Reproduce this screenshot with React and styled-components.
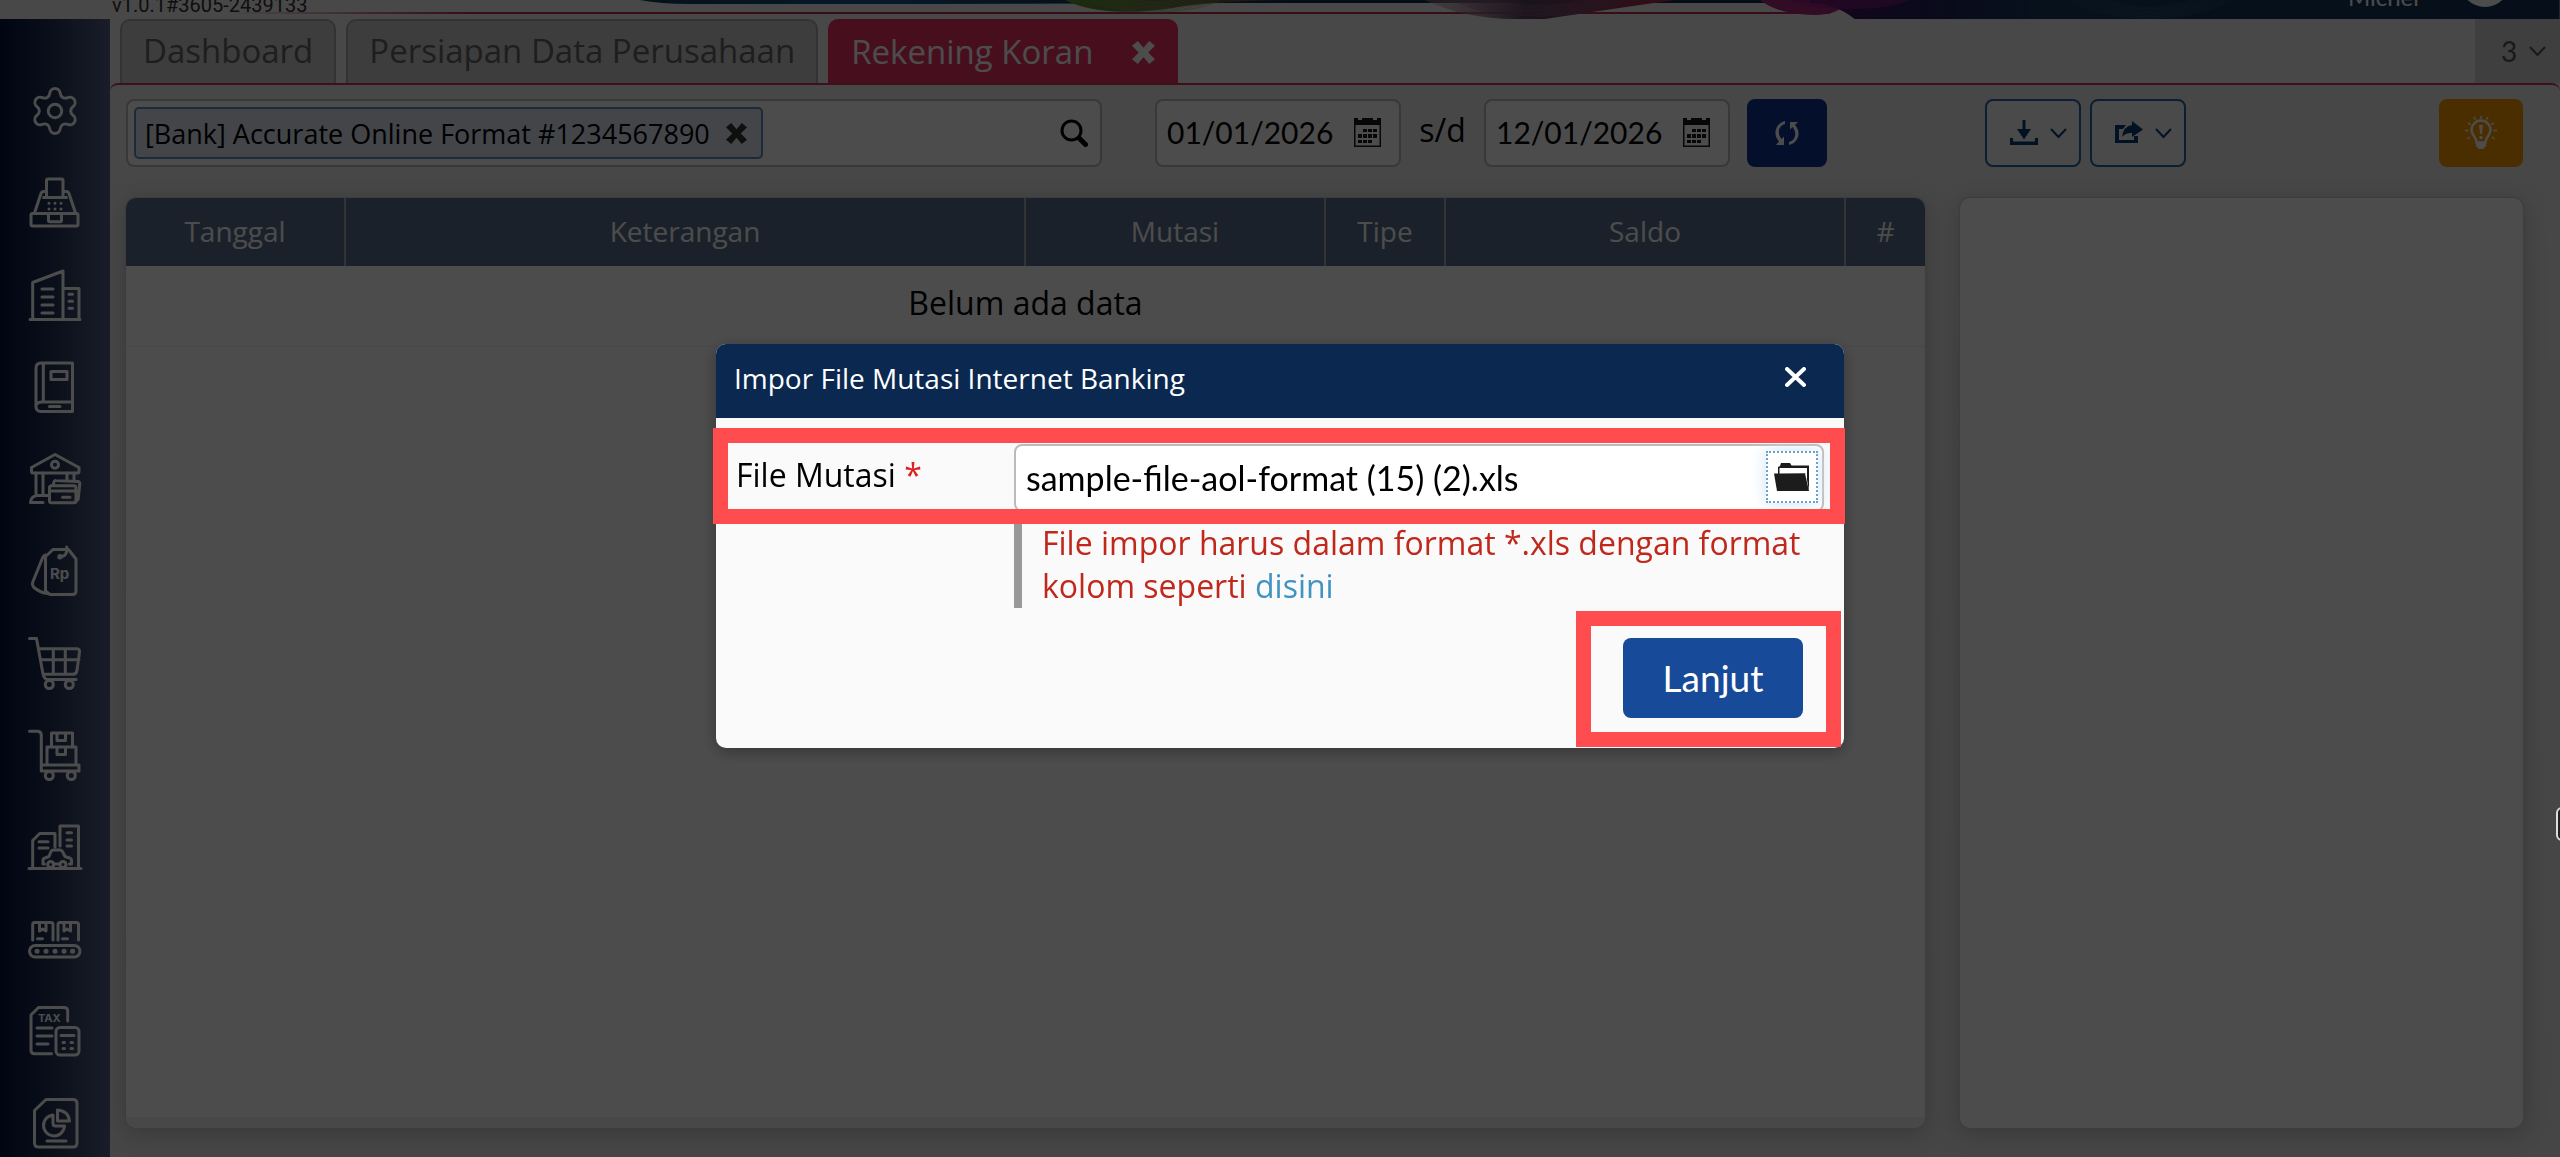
import styled, { createGlobalStyle, css } from "styled-components";
import { Settings } from "lucide-react";
import { useState } from "react";

const GlobalStyle = createGlobalStyle`
  * {
    box-sizing: border-box;
  }

  body {
    margin: 0;
    font-family: "Open Sans", "Noto Sans", sans-serif;
    font-size: 32px;
    color: #000;
    background: #f0f0f0;
  }

  button, input {
    font-family: inherit;
  }
`;

const Shell = styled.div`
  height: 100vh;
  display: flex;
  flex-direction: column;
  overflow: hidden;
`;

const Header = styled.header`
  position: relative;
  flex: none;
  height: 19px;
  display: flex;
  align-items: flex-end;
  justify-content: space-between;
  padding: 0 50px 0 112px;
  overflow: hidden;
  background: #f0f0f0;
`;

const Wave = styled.svg`
  position: absolute;
  top: 0;
  right: 0;
  width: 91%;
  height: 100%;
`;

const Version = styled.span`
  position: relative;
  font-family: Roboto, sans-serif;
  font-size: 20px;
  line-height: 20px;
  padding-bottom: 4px;
  color: #333;
`;

const User = styled.div`
  position: relative;
  display: flex;
  align-items: flex-end;
  gap: 38px;
  padding-bottom: 12px;
  font-family: Lato, sans-serif;
  font-size: 24px;
  line-height: 20px;
  color: #fff;
`;

const Avatar = styled.span`
  width: 50px;
  height: 50px;
  border-radius: 50%;
  background: #fff;
`;

const Body = styled.div`
  flex: 1;
  min-height: 0;
  display: flex;
`;

const Sidebar = styled.nav`
  flex: none;
  width: 110px;
  padding-top: 46px;
  overflow: hidden;
  background: linear-gradient(90deg, #00123c 0%, #24365a 50%, #57638a 100%);
`;

const NavItem = styled.a`
  height: 92px;
  display: flex;
  align-items: center;
  justify-content: center;
  color: #fff;

  svg {
    overflow: visible;
  }
`;

const Main = styled.main`
  flex: 1;
  min-width: 0;
  display: flex;
  flex-direction: column;
`;

const TabBar = styled.div`
  flex: none;
  height: 64px;
  display: flex;
  gap: 10px;
  padding-left: 10px;
`;

const Tab = styled.button`
  display: flex;
  align-items: center;
  gap: 39px;
  padding: 0 21px 2px;
  border: 2px solid #aaa;
  border-bottom: none;
  border-radius: 10px 10px 0 0;
  background: #cdcdcd;
  color: #666;
  font-size: 33px;
  line-height: 44px;
  white-space: nowrap;

  ${({ $active }) =>
    $active &&
    css`
      padding-bottom: 0;
      border-color: #ed3264;
      background: #ed3264;
      color: #fff;
    `}
`;

const TabCount = styled.button`
  margin-left: auto;
  width: 85px;
  display: flex;
  align-items: center;
  justify-content: center;
  gap: 12px;
  padding: 0 0 0 12px;
  border: none;
  background: #d4d4d4;
  color: #555;
  font-family: Lato, sans-serif;
  font-size: 28px;
`;

const Workspace = styled.section`
  flex: 1;
  min-height: 0;
  display: grid;
  grid-template-columns: minmax(0, 1fr) 563px;
  grid-template-rows: 68px minmax(0, 1fr);
  gap: 31px 35px;
  padding: 14px 37px 29px 16px;
  border-top: 2px solid #d0365f;
  border-radius: 8px 8px 0 0;
  background: linear-gradient(#eee, #e9e9e9);
`;

const Toolbar = styled.div`
  display: flex;
  align-items: stretch;
  padding-right: ${({ $end }) => $end || 0}px;
  padding-left: ${({ $start }) => $start || 0}px;
`;

const SearchBox = styled.div`
  flex: 1;
  min-width: 0;
  display: flex;
  align-items: center;
  gap: 10px;
  margin-right: 53px;
  padding: 6px 12px 6px 6px;
  border: 2px solid #bbb;
  border-radius: 8px;
  background: #fff;
`;

const Chip = styled.span`
  display: flex;
  align-items: center;
  gap: 16px;
  height: 52px;
  padding: 0 14px 0 9px;
  border: 2px solid #5b8fc7;
  border-radius: 5px;
  background: #dfe6f3;
  font-size: 27px;
  white-space: nowrap;

  svg {
    color: #333;
  }
`;

const IconButton = styled.button`
  display: flex;
  align-items: center;
  justify-content: center;
  padding: 0;
  border: none;
  background: none;
  color: inherit;
  cursor: pointer;
`;

const SearchInput = styled.input`
  flex: 1;
  min-width: 0;
  border: none;
  outline: none;
  background: none;
  font-size: 28px;
`;

const DateField = styled.span`
  width: 246px;
  display: flex;
  align-items: center;
  padding: 0 18px 2px 10px;
  border: 2px solid #bbb;
  border-radius: 8px;
  background: #fff;

  input {
    flex: 1;
    min-width: 0;
    padding: 0;
    border: none;
    outline: none;
    background: none;
    font-family: Lato, sans-serif;
    font-size: 30px;
  }
`;

const Until = styled.span`
  width: 83px;
  text-align: center;
  line-height: 62px;
`;

const ToolButton = styled.button`
  width: ${({ $width }) => $width}px;
  display: flex;
  align-items: center;
  justify-content: center;
  gap: 12px;
  padding: 0 0 0 ${({ $outline }) => ($outline ? 11 : 0)}px;
  border-radius: 8px;
  border: 2px solid ${({ $color }) => $color};
  background: ${({ $color, $outline }) => ($outline ? "#f8f8f8" : $color)};
  color: ${({ $outline }) => ($outline ? "#0a3c74" : "#fff")};
  margin-left: ${({ $push }) => $push};
`;

const Card = styled.div`
  position: relative;
  display: flex;
  flex-direction: column;
  overflow: hidden;
  border-radius: 10px;
  background: #fff;
  box-shadow: 0 0 0 1px #ccc, 0 4px 24px rgba(0, 0, 0, 0.22);
`;

const CardFoot = styled.div`
  height: 11px;
  margin-top: auto;
  background: #f0f0f0;
`;

const Table = styled.table`
  width: 100%;
  table-layout: fixed;
  border-collapse: collapse;

  th {
    height: 68px;
    padding: 0 0 2px;
    font-size: 28px;
    font-weight: 400;
    color: #fff;
    background: #5a718c;
  }

  th + th {
    border-left: 2px solid #aaa;
  }

  td {
    height: 80px;
    padding: 0 0 6px;
    text-align: center;
    border-bottom: 1px solid #eee;
  }
`;

const Backdrop = styled.div`
  position: fixed;
  inset: 0;
  display: flex;
  justify-content: center;
  align-items: flex-start;
  padding-top: 344px;
  background: rgba(0, 0, 0, 0.7);
`;

const Dialog = styled.div`
  width: 1128px;
  max-width: 96vw;
  border-radius: 10px;
  background: #fafafa;
  box-shadow: 0 4px 16px rgba(0, 0, 0, 0.3);
`;

const DialogHead = styled.div`
  height: 74px;
  display: flex;
  align-items: center;
  justify-content: space-between;
  padding: 0 38px 6px 18px;
  border-radius: 10px 10px 0 0;
  background: #0a2850;
  color: #fff;

  h2 {
    margin: 0;
    font-size: 28px;
    font-weight: 400;
  }
`;

const DialogBody = styled.form`
  padding: 26px 20px 0;
`;

const FormRow = styled.div`
  position: relative;
  display: flex;

  label {
    width: 278px;
    line-height: 62px;
  }

  em {
    font-style: normal;
    color: #dd2020;
  }
`;

const FileField = styled.span`
  flex: 1;
  height: 68px;
  display: flex;
  align-items: center;
  padding: 0 4px 2px 10px;
  border: 2px solid #bbb;
  border-radius: 8px;
  background: #fff;

  input {
    flex: 1;
    padding: 0;
    border: none;
    outline: none;
    font-family: Lato, sans-serif;
    font-size: 34px;
  }
`;

const BrowseButton = styled(IconButton)`
  width: 52px;
  height: 52px;
  border: 2px dotted #67a3cf;
  box-shadow: 0 0 16px #cfe4f7;
  color: #1c1c1c;
`;

const Hint = styled.p`
  margin: 0 0 0 278px;
  padding: 9px 8px 1px 20px;
  border-left: 8px solid #999;
  line-height: 43px;
  color: #c0281c;

  a {
    color: #4193c1;
    text-decoration: none;
  }
`;

const DialogFoot = styled.div`
  display: flex;
  justify-content: flex-end;
  padding: 30px 21px 30px 0;
`;

const Focus = styled.span`
  position: relative;
  display: flex;
`;

const SubmitButton = styled.button`
  width: 180px;
  height: 80px;
  padding-bottom: 3px;
  border: none;
  border-radius: 8px;
  background: #174a98;
  color: #fff;
  font-family: Lato, sans-serif;
  font-size: 37px;
`;

// thick frame drawn around the part the user should look at
const Marker = styled.span`
  position: absolute;
  inset: ${({ $inset }) => $inset};
  border: 15px solid #ff4d4f;
  pointer-events: none;
`;

const EdgeHandle = styled.button`
  position: fixed;
  right: -20px;
  top: 807px;
  width: 24px;
  height: 34px;
  border: 2px solid #ddd;
  border-radius: 6px;
  background: #222;
`;

const line = {
  fill: "none",
  stroke: "currentColor",
  strokeWidth: 3,
  strokeLinecap: "round",
  strokeLinejoin: "round",
};

const Svg = ({ w = 52, h = 52, children, ...rest }) => (
  <svg width={w} height={h} viewBox={`0 0 ${w} ${h}`} aria-hidden="true" {...rest}>
    {children}
  </svg>
);

const Cashier = () => (
  <Svg {...line}>
    <rect x="2" y="36.5" width="47" height="12.5" rx="1.5" />
    <path d="M5.5 36 12 16.5q.6-2 3-2h2M46.5 36 40 16.5q-.6-2-3-2h-2M14.5 20.5h23" />
    <path d="M17.5 20V3.5q0-1.5 1.5-1.5h13.5q1.5 0 1.5 1.5V20M19.5 37v6.5q0 1.2 1.2 1.2h10.6q1.2 0 1.2-1.2V37" />
    <path d="M20 26.3h0M26 26.3h0M32 26.3h0M20 32h0M26 32h0M32 32h0" />
  </Svg>
);

const Building = () => (
  <Svg {...line}>
    <path d="M1 50.5h50M3.7 50V13.5L34 2v48M34 19.5h16V50M13 20h11M13 28h11M13 36h11M13 44h11M40 25.3h3.5M40 32.3h3.5M40 39.3h3.5" />
  </Svg>
);

const Ledger = () => (
  <Svg {...line}>
    <path d="M43.5 2H12q-5 0-5 5v38.5q0 5 5 5h31.5zM14.3 2v39M7.5 43.5q1.5-2.5 5-2.5h31M20.5 45.5H31" />
    <path d="M22 10.5h16v8H22z" />
  </Svg>
);

const Bank = () => (
  <Svg {...line}>
    <path d="M26 1.5 2.5 14.5v4q0 1.5 1.5 1.5h44.5q1.5 0 1.5-1.5v-4z" />
    <circle cx="26" cy="11.7" r="3.5" />
    <path d="M7 20v22M14 20v21M38 20v6M45 20v6M20 42.5H7.5q-5.5 1-6 7H14" />
    <rect x="20.5" y="32.7" width="26.5" height="17" rx="2" />
    <path d="M20.5 38H47M33.500 44.3H41M24.5 32q0-4.7 2.5-4.5l22 1q2 .5 1.8 2.500l-1.6 15q-.5 1.5-2 1.5" />
  </Svg>
);

const PriceTag = () => (
  <Svg {...line}>
    <path d="M16.5 11.5 24 4.5h15.5L47 14v32q0 3.5-3.5 3.5H21L16.5 46z" />
    <path d="M16.5 10q-2 .5-3 3L3.8 37q-1 3 1.2 5.5 6 5 13 6M37.7 2v3.5q0 5-6 6.5" />
    <circle cx="31" cy="11.7" r="1.2" />
    <text x="21" y="34" fontFamily="Inter, sans-serif" fontSize="15" fontWeight="700" fill="currentColor" stroke="none">
      Rp
    </text>
  </Svg>
);

const Cart = () => (
  <Svg {...line}>
    <path d="M.5 1.5h7L14 37q1 5.5 5 5.5h28M10 11.7h37.5q3.5 0 3 3.5L48 33.2q-.5 4-4 4H14M12 22.7h38M24.3 12v25M36.3 12v25" />
    <circle cx="20.3" cy="47.5" r="4" />
    <circle cx="40.3" cy="47.5" r="4" />
  </Svg>
);

const Trolley = () => (
  <Svg {...line}>
    <path d="M.5 2.3h8q3.8 0 3.8 4V42H50v-6H13" />
    <path d="M22.5 17V4h21v13M18 35V18h29v17M28 4v7.5h8.5V4M28 18v7.5h8.5V18" />
    <circle cx="20.3" cy="46.5" r="4" />
    <circle cx="42.3" cy="46.5" r="4" />
  </Svg>
);

const Assets = () => (
  <Svg {...line}>
    <path d="M0 47.5h52M3.7 47V19.5l7-7H26V26M31 25V5h18.5v42M10 20.7h9M10 27h9M38 11.7h4.5M38 19h4.5M38 25h4.5" />
    <path d="M15.5 43H14v-3.5q0-2 2-2.5l4-1.5 2-5q.8-1.5 2.5-1.5H31q1.5 0 2.5 1.5l2.5 5 4.5 1.5q2 .5 2 2.5V43h-2M25 43h5" />
    <circle cx="21.7" cy="43.5" r="3" />
    <circle cx="34" cy="43.5" r="3" />
  </Svg>
);

const Conveyor = () => (
  <Svg {...line}>
    <path d="M3.7 27V11.5q0-2 2-2H22q2 0 2 2V27M29 27V11.5q0-2 2-2h16.5q2 0 2 2V27M10.5 10v8l3-2 3.500 2v-8M35 10v8l3-2 3.500 2v-8M8.5 25.7h5M33.5 25.7h5" />
    <rect x="0.5" y="32.5" width="50.5" height="11.5" rx="5.7" />
    <path d="M8 38.2h.1M17 38.2h.1M26 38.2h.1M35 38.2h.1M43.5 38.2h.1" strokeWidth="5" />
  </Svg>
);

const Tax = () => (
  <Svg {...line}>
    <path d="M22.5 48.7h-17Q2 48.7 2 45.2V10l7.5-7.5H35q3.7 0 3.7 3.7V16M8 23h15M8 31h15M8 39h11" />
    <rect x="27" y="22.5" width="23" height="27.5" rx="4" />
    <path d="M32 30.5h13M34 37.5h1.5M42 37.5h1.5M34 43.5h1.5M42 43.5h1.5" />
    <text x="9" y="17" fontFamily="Inter, sans-serif" fontSize="11" fontWeight="700" fill="currentColor" stroke="none">
      TAX
    </text>
  </Svg>
);

const Report = () => (
  <Svg {...line}>
    <path d="M5.5 13.5 17 2.5h27q4 0 4 4V46q0 4-4 4H9.500q-4 0-4-4z" />
    <path d="M24 18a10.5 10.5 0 1 0 11.5 11h-9Q24 29 24 26.5zM28.5 13v11h12q-1-10-12-11zM18 44h19" />
  </Svg>
);

const Gear = () => <Settings size={54} strokeWidth={1.3} aria-hidden="true" />;

const Cross = ({ size = 23 }) => (
  <Svg w={size} h={size} viewBox="0 0 22 22">
    <path
      d="M5.5 0 11 6.5 16.5 0 22 4.5 15.5 11 22 17.5 16.5 22 11 15.5 5.5 22 0 17.5 6.5 11 0 4.5z"
      fill="currentColor"
    />
  </Svg>
);

const Chevron = () => (
  <Svg w={17} h={11} {...line} strokeWidth="2" strokeLinecap="butt" strokeLinejoin="miter">
    <path d="M1 1l7.5 8L16 1" />
  </Svg>
);

const Magnifier = () => (
  <Svg w={28} h={28} {...line} strokeWidth="3">
    <circle cx="11.5" cy="11.5" r="9.5" />
    <path d="M19 19l6.5 6.5" strokeWidth="5" />
  </Svg>
);

const Calendar = () => (
  <Svg w={27} h={30} fill="#1a1a1a">
    <path d="M0 1h4v2h4V1h11v2h4V1h4v29H0zM1.5 8v20.5h24V8z" fillRule="evenodd" />
    <path d="M9 12h4v3H9zM14 12h4v3h-4zM19 12h4v3h-4zM4 17h4v4H4zM9 17h4v4H9zM14 17h4v4h-4zM19 17h4v4h-4zM4 23h4v3H4zM9 23h4v3H9zM14 23h4v3h-4z" />
  </Svg>
);

const Refresh = () => (
  <Svg w={24} h={24} fill="currentColor">
    <path d="M10 0v3C3 5 2 13 6.5 18L9 15.5V24H1l3-3.5C-3 13 1 2 10 0zM14 24v-3c7-2 8-10 3.5-15L15 8.5V1h8l-3 3c7 7.5 3 18-6 20z" />
  </Svg>
);

const Download = () => (
  <Svg w={28} h={26} fill="currentColor">
    <path d="M12.5 0h3v9H21l-7 10.5L7 9h5.5zM0 18h3v3.5h22V18h3v7H0z" />
  </Svg>
);

const Share = () => (
  <Svg w={28} h={26} fill="currentColor">
    <path d="M0 5h11L8 9H4v11h15v-4h4v7H0zM17 1l11 8.5L17 17v-4q-6-.5-10 4Q8 6.5 17 5z" />
  </Svg>
);

const Bulb = () => (
  <Svg w={32} h={34} fill="none" stroke="currentColor" strokeWidth="2">
    <path d="M11.5 26.5C11 20 6.5 19.5 6.5 14a9.5 9.5 0 0 1 19 0c0 5.5-4.5 6-5 12.5z" strokeWidth="2.5" />
    <path d="M11 27h10v4h-2v2h-6v-2h-2z" fill="currentColor" stroke="none" />
    <path d="M14 9h4l-1 9h-2zM14.5 20h3v3h-3z" fill="currentColor" stroke="none" />
    <path d="M16 0v3M9 1l1.5 2.5M23 1l-1.5 2.5M3 7l2.5 1.5M29 7l-2.5 1.5M0 14.5h3.5M28.5 14.5H32M2.5 23 5 21M29.5 23 27 21" strokeWidth="1.5" />
  </Svg>
);

const Close = () => (
  <Svg w={21} h={22} {...line} strokeWidth="4">
    <path d="M2 2l17 16M19 2 2 18" />
  </Svg>
);

const Folder = () => (
  <Svg w={36} h={30} fill="currentColor">
    <path d="M4 12V5l2-1 1-3h9l1.5 2.5H35V29L32 12z" />
    <path d="M5.5 12V6H33v17l-1.5-11.5z" fill="#fff" />
    <path d="M0 11.5h31L35 29H3z" />
  </Svg>
);

const menu = [
  ["Pengaturan", Gear],
  ["Kasir", Cashier],
  ["Perusahaan", Building],
  ["Buku Besar", Ledger],
  ["Kas & Bank", Bank],
  ["Penjualan", PriceTag],
  ["Pembelian", Cart],
  ["Persediaan", Trolley],
  ["Aset Tetap", Assets],
  ["Manufaktur", Conveyor],
  ["Pajak", Tax],
  ["Laporan", Report],
];

const rings = [0, 4, 8, 12, 16, 20, 24, 28, 32];

const HeaderWave = () => (
  <Wave viewBox="0 0 2330 19" preserveAspectRatio="none" aria-hidden="true">
    <defs>
      <linearGradient id="rule" gradientUnits="userSpaceOnUse" x1="0" y1="0" x2="1600" y2="0">
        <stop offset="0" stopColor="#b83050" stopOpacity="0" />
        <stop offset="0.15" stopColor="#b83050" />
      </linearGradient>
      <linearGradient id="navy">
        <stop offset="0" stopColor="#123a5c" />
        <stop offset="0.2" stopColor="#1c5488" />
        <stop offset="0.4" stopColor="#12304c" />
        <stop offset="1" stopColor="#12304c" />
      </linearGradient>
      <linearGradient id="green">
        <stop offset="0" stopColor="#609838" />
        <stop offset="0.5" stopColor="#5c6038" />
        <stop offset="1" stopColor="#a05048" stopOpacity="0.6" />
      </linearGradient>
      <linearGradient id="pink">
        <stop offset="0" stopColor="#d0a0b0" stopOpacity="0.4" />
        <stop offset="0.4" stopColor="#54445c" />
        <stop offset="1" stopColor="#b02c50" />
      </linearGradient>
      <linearGradient id="night">
        <stop offset="0" stopColor="#4a1468" />
        <stop offset="0.15" stopColor="#24205c" />
        <stop offset="0.3" stopColor="#163a60" />
        <stop offset="1" stopColor="#143454" />
      </linearGradient>
    </defs>
    <path d="M0 12h1600v2H0z" fill="url(#rule)" />
    <path d="M410 0h1200v3H1000L700 4H460q-30 0-50-4z" fill="url(#navy)" />
    <path d="M835 0h230q-60 0-110 6-80 14-120-6z" fill="url(#green)" />
    <path d="M1195 0h250q-70 10-130 19h-30q-50 0-90-19z" fill="url(#pink)" />
    <path d="M1530 0h90q-10 15-35 15-35 0-55-15z" fill="#a8287c" />
    <path d="M1580 3q25 0 45 16h705V0h-750z" fill="url(#night)" />
    {rings.map((r) => (
      <g key={r} fill="none" stroke="#2c5a7c" strokeWidth="0.5">
        <ellipse cx="1920" cy="-16" rx={90 - r} ry={34 - r / 3} />
        <ellipse cx="1310" cy="-8" rx={90 - r} ry={24 - r / 3} stroke="#8c5c80" />
        <ellipse cx="925" cy="-8" rx={70 - r} ry={20 - r / 3} stroke="#88a860" />
      </g>
    ))}
    <path d="M1560 0h120q-20 9-60 9-40 0-60-9z" fill="#8c1c80" opacity="0.6" />
  </Wave>
);

export default function App() {
  const [from, setFrom] = useState("01/01/2026");
  const [to, setTo] = useState("12/01/2026");
  const [query, setQuery] = useState("");

  return (
    <>
      <GlobalStyle />
      <Shell>
        <Header>
          <HeaderWave />
          <Version>v1.0.1#3605-2439133</Version>
          <User>
            Micher
            <Avatar />
          </User>
        </Header>

        <Body>
          <Sidebar>
            {menu.map(([name, Icon]) => (
              <NavItem href="#" key={name} aria-label={name}>
                <Icon />
              </NavItem>
            ))}
          </Sidebar>

          <Main>
            <TabBar>
              <Tab>Dashboard</Tab>
              <Tab>Persiapan Data Perusahaan</Tab>
              <Tab $active>
                Rekening Koran
                <Cross />
              </Tab>
              <TabCount>
                3
                <Chevron />
              </TabCount>
            </TabBar>

            <Workspace>
              <Toolbar $end={98}>
                <SearchBox>
                  <Chip>
                    [Bank] Accurate Online Format #1234567890
                    <IconButton aria-label="Hapus">
                      <Cross size={21} />
                    </IconButton>
                  </Chip>
                  <SearchInput aria-label="Cari rekening" value={query} onChange={(e) => setQuery(e.target.value)} />
                  <IconButton aria-label="Cari">
                    <Magnifier />
                  </IconButton>
                </SearchBox>
                <DateField>
                  <input aria-label="Dari tanggal" value={from} onChange={(e) => setFrom(e.target.value)} />
                  <IconButton aria-label="Pilih tanggal awal">
                    <Calendar />
                  </IconButton>
                </DateField>
                <Until>s/d</Until>
                <DateField>
                  <input aria-label="Sampai tanggal" value={to} onChange={(e) => setTo(e.target.value)} />
                  <IconButton aria-label="Pilih tanggal akhir">
                    <Calendar />
                  </IconButton>
                </DateField>
                <ToolButton $width={80} $color="#10388f" $push="17px" aria-label="Muat ulang">
                  <Refresh />
                </ToolButton>
              </Toolbar>

              <Toolbar $start={25}>
                <ToolButton $width={96} $color="#2468a4" $outline aria-label="Unduh">
                  <Download />
                  <Chevron />
                </ToolButton>
                <ToolButton $width={96} $color="#2468a4" $outline $push="9px" aria-label="Bagikan">
                  <Share />
                  <Chevron />
                </ToolButton>
                <ToolButton $width={84} $color="#fc9c00" $push="auto" aria-label="Petunjuk">
                  <Bulb />
                </ToolButton>
              </Toolbar>

              <Card>
                <Table>
                  <colgroup>
                    <col width="219" />
                    <col />
                    <col width="300" />
                    <col width="120" />
                    <col width="400" />
                    <col width="80" />
                  </colgroup>
                  <thead>
                    <tr>
                      <th>Tanggal</th>
                      <th>Keterangan</th>
                      <th>Mutasi</th>
                      <th>Tipe</th>
                      <th>Saldo</th>
                      <th>#</th>
                    </tr>
                  </thead>
                  <tbody>
                    <tr>
                      <td colSpan={6}>Belum ada data</td>
                    </tr>
                  </tbody>
                </Table>
                <CardFoot />
              </Card>

              <Card />
            </Workspace>
          </Main>
        </Body>
      </Shell>

      <Backdrop>
        <Dialog role="dialog" aria-labelledby="dialog-title">
          <DialogHead>
            <h2 id="dialog-title">Impor File Mutasi Internet Banking</h2>
            <IconButton aria-label="Tutup">
              <Close />
            </IconButton>
          </DialogHead>
          <DialogBody onSubmit={(e) => e.preventDefault()}>
            <FormRow>
              <label htmlFor="file">
                File Mutasi <em>*</em>
              </label>
              <FileField>
                <input id="file" readOnly value="sample-file-aol-format (15) (2).xls" />
                <BrowseButton type="button" aria-label="Pilih file">
                  <Folder />
                </BrowseButton>
              </FileField>
              <Marker $inset="-16px -21px -12px -23px" />
            </FormRow>
            <Hint>
              File impor harus dalam format *.xls dengan format kolom seperti <a href="#">disini</a>
            </Hint>
            <DialogFoot>
              <Focus>
                <SubmitButton type="submit">Lanjut</SubmitButton>
                <Marker $inset="-27px -38px -29px -47px" />
              </Focus>
            </DialogFoot>
          </DialogBody>
        </Dialog>
      </Backdrop>
      <EdgeHandle aria-label="Buka panel" />
    </>
  );
}
